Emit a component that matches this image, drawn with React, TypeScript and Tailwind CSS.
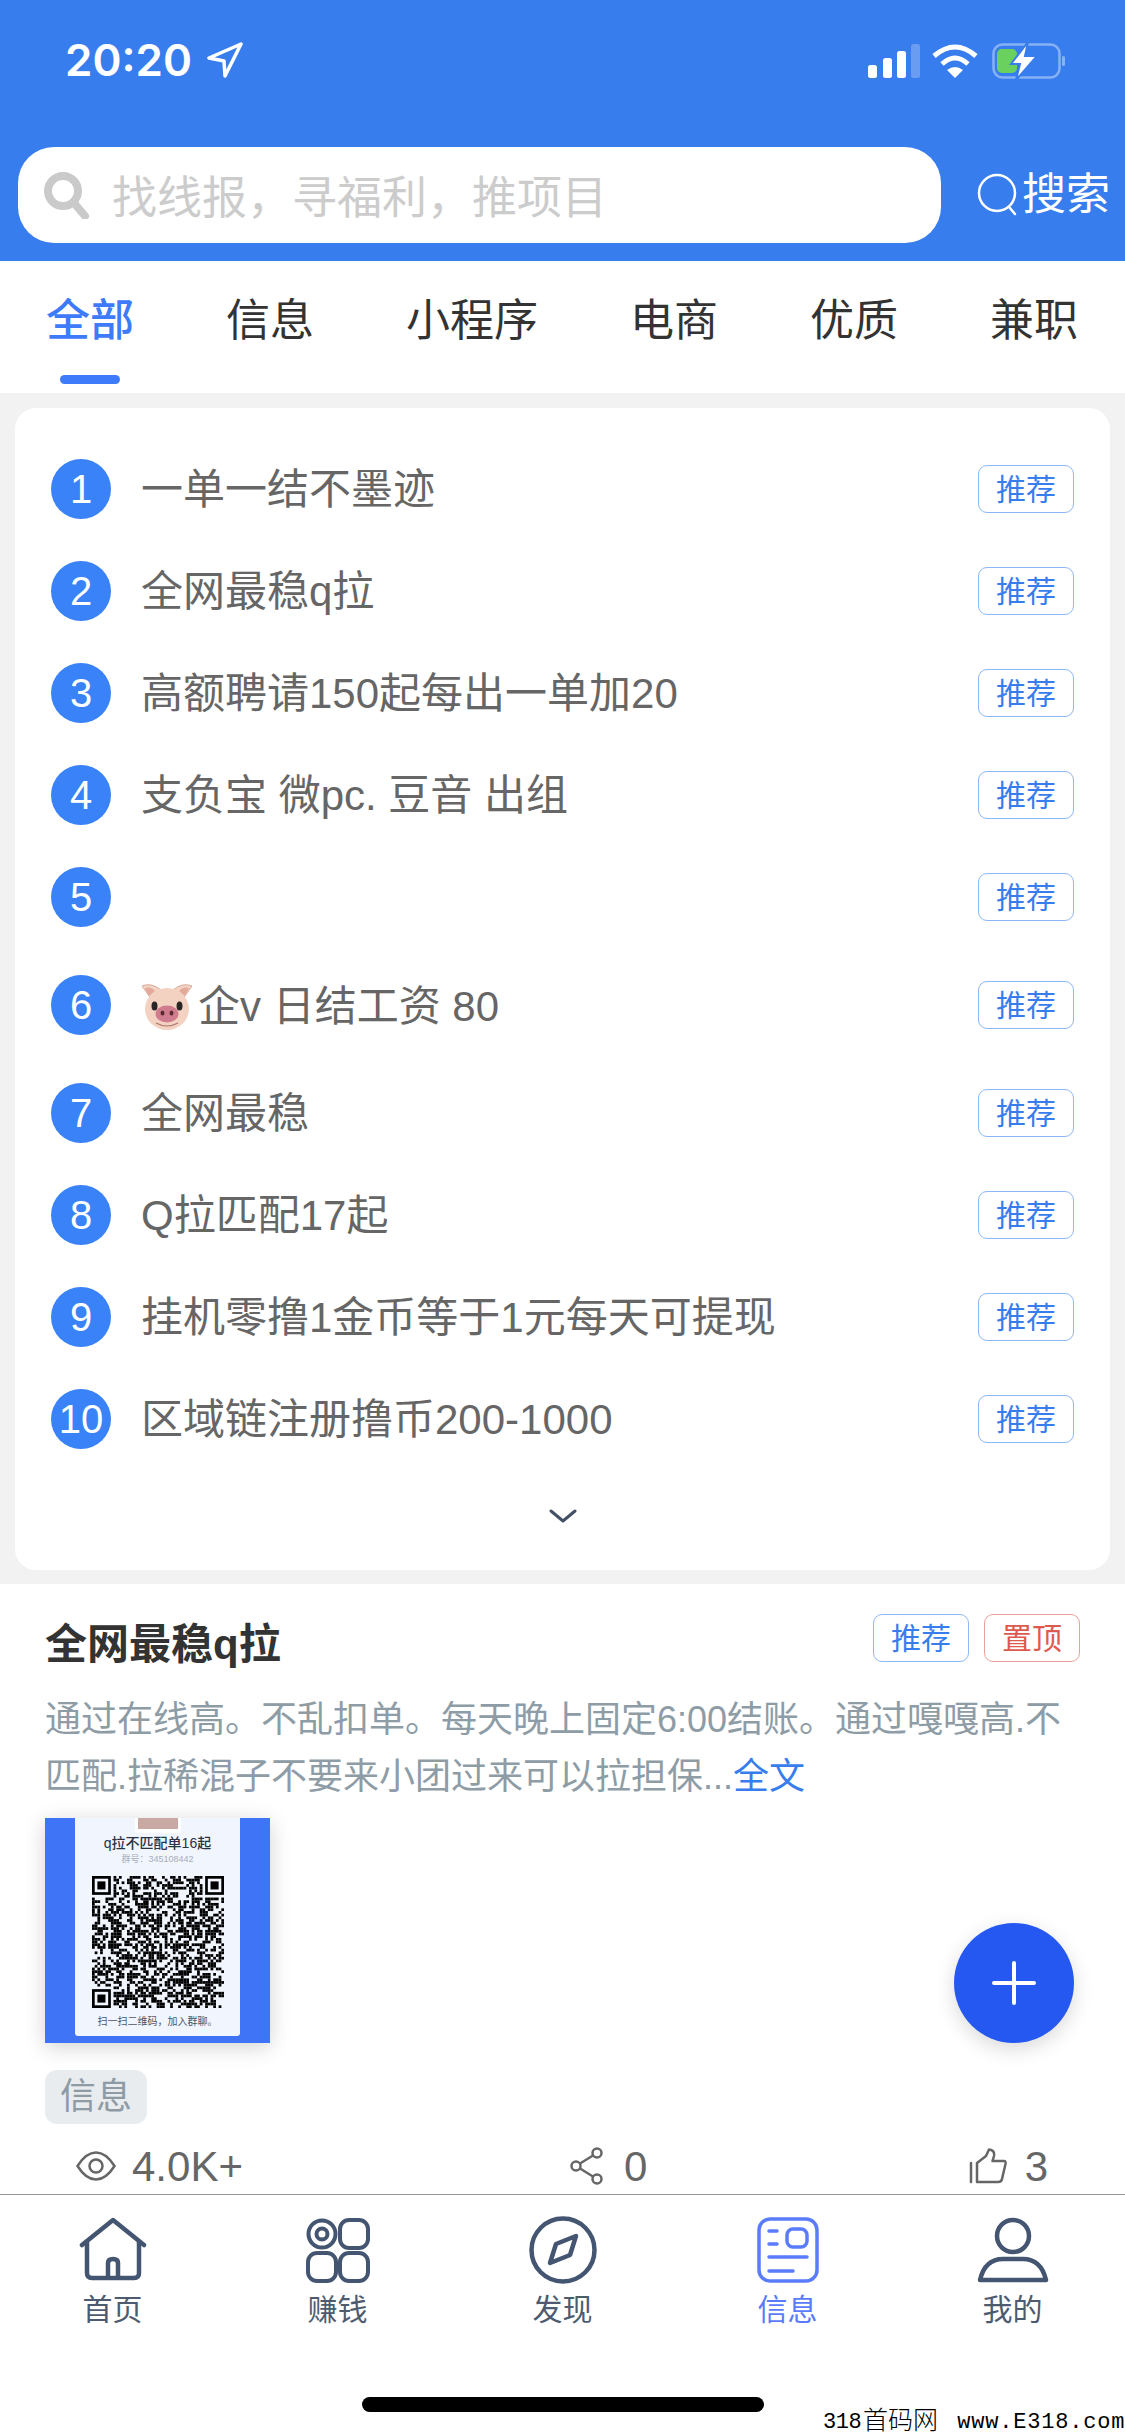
import React from "react";

const FONT = "font-['Liberation_Sans','Noto_Sans_CJK_SC',sans-serif]";

const rows = [
  { text: "一单一结不墨迹", h: "h-[102px]" },
  { text: "全网最稳q拉", h: "h-[102px]" },
  { text: "高额聘请150起每出一单加20", h: "h-[102px]" },
  { text: "支负宝 微pc. 豆音 出组", h: "h-[102px]" },
  { text: "", h: "h-[102px]" },
  { text: "企v 日结工资 80", h: "h-[114px]", pig: true },
  { text: "全网最稳", h: "h-[102px]" },
  { text: "Q拉匹配17起", h: "h-[102px]" },
  { text: "挂机零撸1金币等于1元每天可提现", h: "h-[102px]" },
  { text: "区域链注册撸币200-1000", h: "h-[102px]" },
];

const Pig = () => (
  <svg width="52" height="48" viewBox="0 0 52 48" className="shrink-0 mr-[5px]">
    <path d="M11 17 L1 3 Q10 -1 20 7Z" fill="#f3d3c2" stroke="#d9a998" strokeWidth="1" />
    <path d="M41 17 L51 3 Q42 -1 32 7Z" fill="#f3d3c2" stroke="#d9a998" strokeWidth="1" />
    <path d="M8 13 L4 5 Q10 3 14 8Z" fill="#e3a99b" />
    <path d="M44 13 L48 5 Q42 3 38 8Z" fill="#e3a99b" />
    <ellipse cx="26" cy="26" rx="22" ry="21" fill="#f4d2c1" />
    <ellipse cx="13.5" cy="23" rx="3" ry="4.5" fill="#2b2523" />
    <ellipse cx="38.5" cy="23" rx="3" ry="4.5" fill="#2b2523" />
    <ellipse cx="26" cy="31" rx="11.5" ry="8.5" fill="#cf7d8e" />
    <ellipse cx="21.5" cy="30" rx="2" ry="2.6" fill="#5b2a33" />
    <ellipse cx="30.5" cy="30" rx="2" ry="2.6" fill="#5b2a33" />
    <path d="M15 40 Q26 46 37 40" fill="none" stroke="#a9766c" strokeWidth="1.2" />
  </svg>
);

const Badge = ({ label, red }: { label: string; red?: boolean }) => (
  <div
    className={`w-[96px] h-[48px] flex items-center justify-center rounded-[9px] border-[1.5px] text-[30px] ${
      red ? "border-[#e9a09a] text-[#dc5a4e]" : "border-[#8db8f8] text-[#387dee]"
    }`}
  >
    {label}
  </div>
);

// fake qr matrix, same seed every render
const QrCode = () => {
  const size = 49;
  let seed = 345108442;
  const next = () => {
    seed = (seed * 1664525 + 1013904223) % 4294967296;
    return seed / 4294967296;
  };
  const inFinder = (x: number, y: number) =>
    (x < 8 && y < 8) || (x >= size - 8 && y < 8) || (x < 8 && y >= size - 8);
  const cells: React.ReactNode[] = [];
  for (let y = 0; y < size; y++) {
    for (let x = 0; x < size; x++) {
      if (!inFinder(x, y) && next() > 0.48) {
        cells.push(<rect key={`${x}-${y}`} x={x} y={y} width="1.02" height="1.02" />);
      }
    }
  }
  const finders = [
    [0, 0],
    [size - 7, 0],
    [0, size - 7],
  ];
  return (
    <svg width="132" height="132" viewBox={`0 0 ${size} ${size}`} fill="#000" className="block">
      {cells}
      {finders.map(([x, y]) => (
        <g key={`${x}${y}`}>
          <rect x={x + 0.5} y={y + 0.5} width="6" height="6" fill="none" stroke="#000" />
          <rect x={x + 2} y={y + 2} width="3" height="3" />
        </g>
      ))}
    </svg>
  );
};

const QrPoster = () => (
  <div className="w-[225px] h-[225px] bg-[#3f74f6] shadow-[0_4px_20px_rgba(0,0,0,0.18)] px-[30px]">
    <div className="w-[165px] h-[218px] bg-[#f1f5fe] rounded-b-[3px] flex flex-col items-center">
      <div className="w-[46px] h-[15px] bg-white rounded-b-[4px] flex justify-center">
        <div className="w-[40px] h-[11px] bg-[#c9a9a4]" />
      </div>
      <div className="mt-[1px] text-[14px] leading-[18px] font-medium text-[#2b3242] whitespace-nowrap">q拉不匹配单16起</div>
      <div className="text-[9px] leading-[12px] mt-[1px] text-[#a7adb8] whitespace-nowrap">{"群号\uFF1A345108442"}</div>
      <div className="mt-[11px]">
        <QrCode />
      </div>
      <div className="mt-[7px] text-[10px] leading-[14px] text-[#4d5566] whitespace-nowrap">{"扫一扫二维码\uFF0C加入群聊。"}</div>
    </div>
  </div>
);

const HomeIcon = () => (
  <svg width="68" height="66" viewBox="0 0 68 66" fill="none" stroke="#445571" strokeWidth="4.5" strokeLinejoin="round" className="block">
    <path d="M3 28 L34 3 L65 28" strokeLinecap="round" />
    <path d="M8 25 V56 Q8 61 13 61 H55 Q60 61 60 56 V25" />
    <path d="M29 61 V46 Q29 42 34 42 Q39 42 39 46 V61" />
  </svg>
);
const EarnIcon = () => (
  <svg width="64" height="66" viewBox="0 0 64 66" fill="none" stroke="#445571" strokeWidth="4" className="block">
    <circle cx="16" cy="17" r="13.5" />
    <circle cx="16" cy="17" r="5.5" />
    <rect x="34" y="3" width="28" height="28" rx="9" />
    <rect x="2" y="36" width="28" height="28" rx="9" />
    <rect x="34" y="36" width="28" height="28" rx="9" />
  </svg>
);
const CompassIcon = () => (
  <svg width="68" height="68" viewBox="0 0 68 68" fill="none" stroke="#445571" strokeWidth="4.5" strokeLinejoin="round" className="block">
    <circle cx="34" cy="34" r="31.5" />
    <path d="M47 20 L41 39 L21 47 L27 28 Z" />
  </svg>
);
const InfoIcon = () => (
  <svg width="62" height="66" viewBox="0 0 62 66" fill="none" stroke="#5b7cfa" strokeLinecap="round" className="block">
    <rect x="2" y="2" width="58" height="62" rx="11" strokeWidth="3.5" />
    <path d="M12 14 H20 M12 27 H20 M12 40 H50 M12 54 H36" strokeWidth="3.5" />
    <rect x="30" y="12" width="20" height="18" rx="6" strokeWidth="3.5" />
  </svg>
);
const UserIcon = () => (
  <svg width="72" height="66" viewBox="0 0 72 66" fill="none" stroke="#445571" strokeWidth="4.5" strokeLinejoin="round" className="block">
    <circle cx="36" cy="19" r="16" />
    <path d="M3 63 Q8 42 26 42 H46 Q64 42 69 63 Z" />
  </svg>
);

const nav = [
  { label: "首页", icon: <HomeIcon /> },
  { label: "赚钱", icon: <EarnIcon /> },
  { label: "发现", icon: <CompassIcon /> },
  { label: "信息", icon: <InfoIcon />, active: true },
  { label: "我的", icon: <UserIcon /> },
];

const StatusBar = () => (
  <div className="h-[147px] pl-[65px] pr-[59px] pt-[36px] flex items-start justify-between">
    <div className="flex items-center h-[48px] text-white">
      <span className="font-['Inter',sans-serif] text-[44px] font-semibold leading-none">20:20</span>
      <svg width="36" height="36" viewBox="0 0 36 36" className="ml-[15px]" fill="none" stroke="#fff" strokeWidth="3.5" strokeLinejoin="round">
        <path d="M34 2 L2 16 L17 19 L18 34 Z" />
      </svg>
    </div>
    <div className="flex items-center h-[48px] mt-[1px]">
      <svg width="52" height="34" viewBox="0 0 52 34">
        <rect x="0" y="21" width="9" height="13" rx="2.5" fill="#fff" />
        <rect x="15" y="14" width="9" height="20" rx="2.5" fill="#fff" />
        <rect x="29" y="7" width="9" height="27" rx="2.5" fill="#fff" />
        <rect x="43" y="0" width="9" height="34" rx="2.5" fill="#fff" fillOpacity="0.25" />
      </svg>
      <svg width="46" height="34" viewBox="0 0 46 34" fill="none" stroke="#fff" strokeWidth="5" className="ml-[12px]">
        <path d="M2 12 Q23 -6 44 12" />
        <path d="M10 20 Q23 8 36 20" />
        <path d="M23 34 L15 26 Q23 20 31 26 Z" fill="#fff" stroke="none" />
      </svg>
      <svg width="74" height="40" viewBox="0 0 74 40" fill="none" className="ml-[14px]">
        <rect x="1.5" y="3.5" width="66" height="33" rx="9" stroke="#fff" strokeOpacity="0.4" strokeWidth="2.5" />
        <rect x="5" y="8" width="20" height="24" rx="5" fill="#6ad15f" />
        <rect x="70" y="15" width="3" height="10" rx="1.5" fill="#fff" fillOpacity="0.4" />
        <path d="M36 1 L19 23 H28 L24 39 L45 15 H33 Z" fill="#fff" stroke="#387dee" strokeWidth="2" />
      </svg>
    </div>
  </div>
);

const SearchBar = () => (
  <div className="h-[114px] flex items-start pl-[18px]">
    <div className="w-[923px] h-[96px] bg-white rounded-[36px] flex items-center pl-[25px]">
      <svg width="46" height="48" viewBox="0 0 46 48" fill="none" stroke="#cacaca" className="shrink-0">
        <circle cx="20" cy="20" r="15" strokeWidth="8" />
        <path d="M31 32 L42 45" strokeWidth="8" strokeLinecap="round" />
      </svg>
      <span className="ml-[23px] mt-[7px] text-[45px] text-[#cccccc] leading-none whitespace-nowrap">{"找线报\uFF0C寻福利\uFF0C推项目"}</span>
    </div>
    <div className="flex items-center h-[96px] ml-[36px] text-white">
      <svg width="42" height="44" viewBox="0 0 42 44" fill="none" stroke="#fff" strokeWidth="2.5">
        <circle cx="20" cy="20" r="18" />
        <path d="M32 34 L38 41" strokeLinecap="round" />
      </svg>
      <span className="text-[44px] leading-none ml-[3px]">搜索</span>
    </div>
  </div>
);

const Tabs = () => {
  const tabs = ["全部", "信息", "小程序", "电商", "优质", "兼职"];
  return (
    <div className="h-[132px] bg-white pl-[46px] pr-[47px] pt-[37px] flex justify-between">
      {tabs.map((tab, i) => (
        <div key={tab} className="relative">
          <span className={`text-[44px] leading-[46px] block ${i === 0 ? "text-[#3e7bfa] font-medium" : "text-[#333333]"}`}>{tab}</span>
          {i === 0 && <div className="absolute left-[14px] top-[77px] w-[60px] h-[9px] rounded-full bg-[#3e7bfa]" />}
        </div>
      ))}
    </div>
  );
};

export default function App() {
  return (
    <div className={`${FONT} relative w-[1125px] h-[2436px] overflow-hidden bg-white`}>
      <div className="bg-[#387dee]">
        <StatusBar />
        <SearchBar />
      </div>
      <Tabs />

      <div className="bg-[#f2f2f2] pt-[15px] pb-[14px] px-[15px]">
        <div className="h-[1162px] bg-white rounded-[21px] pt-[30px] pl-[36px] pr-[36px] flex flex-col">
          {rows.map((row, i) => (
            <div key={i} className={`${row.h} flex items-center`}>
              <div className="w-[60px] h-[60px] rounded-full bg-[#3a82f7] flex items-center justify-center text-white text-[40px] shrink-0">
                {i + 1}
              </div>
              <div className={`ml-[30px] flex-1 flex items-center text-[42px] text-[#666666] whitespace-nowrap ${row.pig ? "pt-[3px]" : ""}`}>
                {row.pig && <Pig />}
                {row.text}
              </div>
              <Badge label="推荐" />
            </div>
          ))}
          <div className="flex justify-center mt-[38px]">
            <svg width="28" height="16" viewBox="0 0 28 16" fill="none" stroke="#445066" strokeWidth="3" strokeLinecap="round" strokeLinejoin="round">
              <path d="M2 3 L14 13 L26 3" />
            </svg>
          </div>
        </div>
      </div>

      <div className="px-[45px] pt-[30px]">
        <div className="flex justify-between h-[47px]">
          <span className="text-[42px] leading-[62px] font-bold text-[#333333]">全网最稳q拉</span>
          <div className="flex gap-[15px]">
            <Badge label="推荐" />
            <Badge label="置顶" red />
          </div>
        </div>
        <p className="mt-[30px] w-[1035px] text-[36px] leading-[57px] text-[#8e9ca6]">
          通过在线高。不乱扣单。每天晚上固定6:00结账。通过嘎嘎高.不匹配.拉稀混子不要来小团过来可以拉担保...
          <span className="text-[#387dee]">全文</span>
        </p>
        <div className="mt-[13px]">
          <QrPoster />
        </div>
        <div className="mt-[27px] w-[102px] h-[54px] rounded-[12px] bg-[#e8ecef] flex items-center justify-center text-[36px] text-[#8e9ba4]">
          信息
        </div>
        <div className="mt-[19px] h-[46px] flex items-center justify-between pl-[31px] pr-[32px] text-[42px] text-[#666666]">
          <div className="flex items-center gap-[16px]">
            <svg width="40" height="30" viewBox="0 0 40 30" fill="none" stroke="#666" strokeWidth="2.5">
              <path d="M1.5 15 Q10 1.5 20 1.5 Q30 1.5 38.5 15 Q30 28.5 20 28.5 Q10 28.5 1.5 15 Z" />
              <circle cx="20" cy="15" r="6.5" />
            </svg>
            <span>4.0K+</span>
          </div>
          <div className="flex items-center gap-[20px] ml-[6px]">
            <svg width="34" height="38" viewBox="0 0 34 38" fill="none" stroke="#666" strokeWidth="2.5">
              <circle cx="27" cy="6" r="4.5" />
              <circle cx="6" cy="19" r="4.5" />
              <circle cx="27" cy="32" r="4.5" />
              <path d="M10 16.5 L23 8.5 M10 21.5 L23 29.5" />
            </svg>
            <span>0</span>
          </div>
          <div className="flex items-center gap-[18px]">
            <svg width="38" height="36" viewBox="0 0 38 36" fill="none" stroke="#666" strokeWidth="2.5" strokeLinejoin="round" strokeLinecap="round">
              <path d="M2 15 V34" />
              <path d="M8 15 L17 8 L20 1.5 Q26 2 25 8 L23.5 13 H35 Q37 13 36.5 16 L33 31 Q32.5 34 29 34 H8 Z" />
            </svg>
            <span>3</span>
          </div>
        </div>
      </div>

      <div className="mt-[5px] border-t-[1.5px] border-[#999999] grid grid-cols-5 pt-[21px]">
        {nav.map((item) => (
          <div key={item.label} className="flex flex-col items-center">
            <div className="h-[68px] flex items-center justify-center">{item.icon}</div>
            <span className={`mt-[8px] text-[30px] leading-[36px] ${item.active ? "text-[#5b7cfa]" : "text-[#4d5b70]"}`}>{item.label}</span>
          </div>
        ))}
      </div>

      <div className="absolute left-[362px] top-[2397px] w-[402px] h-[15px] rounded-full bg-black" />
      <div className="absolute left-[954px] top-[1923px] w-[120px] h-[120px] rounded-full bg-[#2458f0] shadow-[0_6px_20px_rgba(0,0,0,0.15)] flex items-center justify-center">
        <svg width="44" height="44" viewBox="0 0 44 44" stroke="#fff" strokeWidth="4" strokeLinecap="round">
          <path d="M22 2 V42 M2 22 H42" />
        </svg>
      </div>
      <div className="absolute left-[823px] top-[2410px] w-[302px] h-[26px] flex items-center bg-white font-['Liberation_Mono','Noto_Sans_CJK_SC',monospace] text-[22px] leading-[26px] text-black whitespace-nowrap">
        <span className="tracking-[-0.5px]">318</span>
        <span className="text-[25px] font-light ml-[2px]">首码网</span>
        <span className="ml-[19px] tracking-[0.8px]">www.E318.com</span>
      </div>
    </div>
  );
}
